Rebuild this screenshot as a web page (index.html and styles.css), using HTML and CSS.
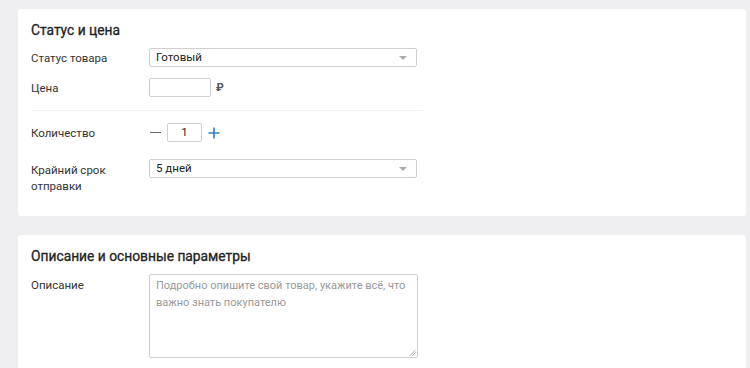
FILE: index.html
```html
<!DOCTYPE html>
<html lang="ru">
<head>
<meta charset="utf-8">
<title>Товар</title>
<link rel="stylesheet" href="styles.css">
</head>
<body>
<div class="page">
  <section class="card">
    <h2 class="card-title">Статус и цена</h2>
    <div class="row">
      <div class="label">Статус товара</div>
      <div class="select"><span>Готовый</span><i class="arrow"></i></div>
    </div>
    <div class="row row-next">
      <div class="label">Цена</div>
      <div class="price"><div class="input price-input"></div><span class="rub">₽</span></div>
    </div>
    <div class="divider"></div>
    <div class="row">
      <div class="label">Количество</div>
      <div class="qty">
        <span class="minus"></span>
        <div class="input qty-input">1</div>
        <svg class="plus" width="12" height="12" viewBox="0 0 12 12"><path d="M6 0.5V11.5M0.5 6H11.5" stroke="#2a80c9" stroke-width="1.6" fill="none"/></svg>
      </div>
    </div>
    <div class="row row-top row-deadline">
      <div class="label label-2">Крайний срок<br>отправки</div>
      <div class="select"><span>5 дней</span><i class="arrow"></i></div>
    </div>
  </section>
  <section class="card card-2">
    <h2 class="card-title">Описание и основные параметры</h2>
    <div class="row row-top">
      <div class="label label-desc">Описание</div>
      <div class="textarea"><span class="placeholder">Подробно опишите свой товар, укажите всё, что важно знать покупателю</span>
        <svg class="grip" width="7" height="7" viewBox="0 0 7 7"><path d="M6.5 1L1 6.5M6.5 3.5L3.5 6.5M6.5 6L6 6.5" stroke="#999" stroke-width="0.8"/></svg>
      </div>
    </div>
  </section>
</div>
</body>
</html>
```

FILE: styles.css
```css
* { box-sizing: border-box; }
html, body { margin: 0; padding: 0; }
body {
  background: #efeef0;
  font-family: Roboto, "Liberation Sans", Arial, sans-serif;
  color: #333;
  font-size: 11.5px;
  width: 750px;
  height: 368px;
  overflow: hidden;
}
.page {
  padding: 9px 4px 0 18px;
  display: flex;
  flex-direction: column;
  gap: 19px;
}
.card {
  background: #fff;
  border-radius: 3px;
  width: 728px;
  padding: 11px 13px 22px;
}
.card-2 { padding-bottom: 40px; }
.card-title {
  margin: 0 0 9px;
  font-size: 13.8px;
  font-weight: 400;
  -webkit-text-stroke: 0.3px #222;
  line-height: 20px;
  color: #222;
  height: 19px;
}
.row {
  display: flex;
  align-items: center;
  min-height: 19px;
}
.row-next { margin-top: 11px; }
.row-top { align-items: flex-start; }
.row-deadline { margin-top: 17px; }
.label {
  width: 118px;
  flex: none;
  line-height: 16px;
  color: #333;
}
.label-2 { padding-top: 3px; }
.label-desc { padding-top: 3px; }
.select {
  width: 268px;
  height: 19px;
  border: 1px solid #cfcfcf;
  border-radius: 2px;
  display: flex;
  align-items: center;
  justify-content: space-between;
  padding: 0 9px 0 6px;
  color: #222;
  line-height: 17px;
}
.arrow {
  width: 0;
  height: 0;
  border-left: 4px solid transparent;
  border-right: 4px solid transparent;
  border-top: 4px solid #aaa;
}
.input {
  height: 19px;
  border: 1px solid #cfcfcf;
  border-radius: 2px;
  background: #fff;
}
.price { display: flex; align-items: center; }
.price-input { width: 62px; }
.rub {
  margin-left: 5px;
  font-weight: 700;
  color: #555;
  font-size: 11px;
}
.divider {
  height: 1px;
  background: #f2f2f3;
  width: 392px;
  margin: 13px 0 12px;
}
.qty { display: flex; align-items: center; }
.minus {
  display: block;
  width: 11px;
  height: 1.5px;
  background: #666;
  margin-left: 1px;
}
.qty-input {
  width: 35px;
  margin-left: 6px;
  text-align: center;
  line-height: 17px;
  color: #222;
}
.plus { margin-left: 6px; }
.textarea {
  position: relative;
  width: 269px;
  height: 84px;
  border: 1px solid #cfcfcf;
  border-radius: 2px;
  padding: 2px 6px;
  line-height: 16px;
}
.placeholder { color: #999; font-size: 11px; }
.grip { position: absolute; right: 1px; bottom: 1px; }
```
